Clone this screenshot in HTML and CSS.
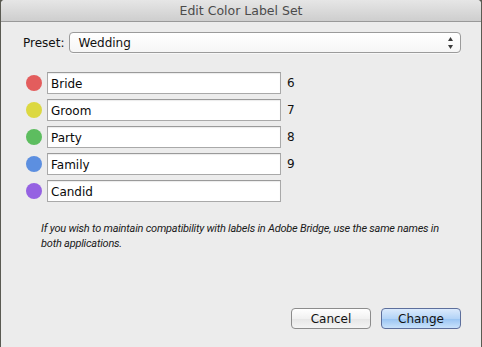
FILE: index.html
```html
<!DOCTYPE html>
<html lang="en">
  <head>
    <meta charset="UTF-8" />
    <title>Edit Color Label Set</title>
    <link rel="stylesheet" href="styles.css">
  </head>
  <body>
    <div class="window">
      <div class="titlebar">Edit Color Label Set</div>
      <div class="content">
        <div class="preset-row">
          <span class="preset-label">Preset:</span>
          <div class="select">
            <span>Wedding</span>
            <svg class="arrows" width="5" height="12" viewBox="0 0 5 12">
              <path d="M2.5 0 L5 4 L0 4 Z" fill="#3a3a3a" />
              <path d="M0 8 L5 8 L2.5 12 Z" fill="#3a3a3a" />
            </svg>
          </div>
        </div>

        <ul class="labels">
          <li class="label-row">
            <span class="dot red"></span>
            <input class="field" type="text" value="Bride" />
            <span class="key">6</span>
          </li>
          <li class="label-row">
            <span class="dot yellow"></span>
            <input class="field" type="text" value="Groom" />
            <span class="key">7</span>
          </li>
          <li class="label-row">
            <span class="dot green"></span>
            <input class="field" type="text" value="Party" />
            <span class="key">8</span>
          </li>
          <li class="label-row">
            <span class="dot blue"></span>
            <input class="field" type="text" value="Family" />
            <span class="key">9</span>
          </li>
          <li class="label-row">
            <span class="dot purple"></span>
            <input class="field" type="text" value="Candid" />
          </li>
        </ul>

        <p class="note">
          If you wish to maintain compatibility with labels in Adobe Bridge, use
          the same names in both applications.
        </p>

        <div class="buttons">
          <button class="btn">Cancel</button>
          <button class="btn default">Change</button>
        </div>
      </div>
    </div>
  </body>
</html>
```

FILE: styles.css
```css
body {
  margin: 0;
  padding: 0;
  background: #5a5a52;
  font-family: "DejaVu Sans", sans-serif;
  font-size: 12px;
  color: #111;
}
.window {
  height: 347px;
  margin: 0 1px;
  background: #ececec;
  border-radius: 4px 4px 0 0;
  display: flex;
  flex-direction: column;
  box-sizing: border-box;
}
.titlebar {
  height: 21px;
  line-height: 21px;
  text-align: center;
  font-size: 12.5px;
  color: #4b4b4b;
  background: linear-gradient(#e6e6e6, #cecece);
  border-bottom: 1px solid #999;
  border-radius: 4px 4px 0 0;
}
.content {
  flex: 1;
  display: flex;
  flex-direction: column;
  padding: 10px 20px 18px 22px;
}
.preset-row {
  display: flex;
  align-items: center;
  gap: 5px;
}
.select {
  flex: 1;
  height: 21px;
  box-sizing: border-box;
  border: 1px solid #9b9b9b;
  border-radius: 4px;
  background: linear-gradient(#ffffff, #f6f6f6);
  display: flex;
  align-items: center;
  justify-content: space-between;
  padding: 0 7px 0 8px;
  box-shadow: 0 1px 0 rgba(255, 255, 255, 0.6);
}
.labels {
  list-style: none;
  margin: 19px 0 0 0;
  padding: 0;
  display: flex;
  flex-direction: column;
  gap: 5px;
}
.label-row {
  display: flex;
  align-items: center;
  height: 22px;
}
.dot {
  width: 16px;
  height: 16px;
  border-radius: 50%;
  margin: 0 5px 0 3px;
}
.red {
  background: #e35d5d;
}
.yellow {
  background: #dcd841;
}
.green {
  background: #5dbd5f;
}
.blue {
  background: #5c8fe0;
}
.purple {
  background: #9562e2;
}
.field {
  width: 234px;
  height: 22px;
  box-sizing: border-box;
  margin: 0;
  padding: 1px 3px 0 3px;
  border: 1px solid #a9a9a9;
  border-top-color: #9a9a9a;
  background: #fff;
  box-shadow: inset 0 1px 1px rgba(0, 0, 0, 0.08);
  font-family: "DejaVu Sans", sans-serif;
  font-size: 12px;
  color: #0a0a0a;
  outline: none;
}
.key {
  margin-left: 6px;
}
.note {
  margin: 19px 0 0 18px;
  width: 410px;
  font-family: "Roboto", sans-serif;
  font-style: italic;
  font-size: 11px;
  letter-spacing: -0.22px;
  line-height: 15px;
  color: #1a1a1a;
}
.buttons {
  margin-top: auto;
  display: flex;
  justify-content: flex-end;
  gap: 10px;
}
.btn {
  width: 80px;
  height: 21px;
  padding: 0;
  border: 1px solid #8c8c8c;
  border-radius: 4px;
  background: linear-gradient(#ffffff, #f1f1f1 50%, #e6e6e6 51%, #f4f4f4);
  font-family: "DejaVu Sans", sans-serif;
  font-size: 12px;
  color: #111;
}
.default {
  border-color: #5d6f9c;
  background: linear-gradient(#dbeafc, #b4d4f7 50%, #98c3f2 51%, #c9e2fb);
}
```
